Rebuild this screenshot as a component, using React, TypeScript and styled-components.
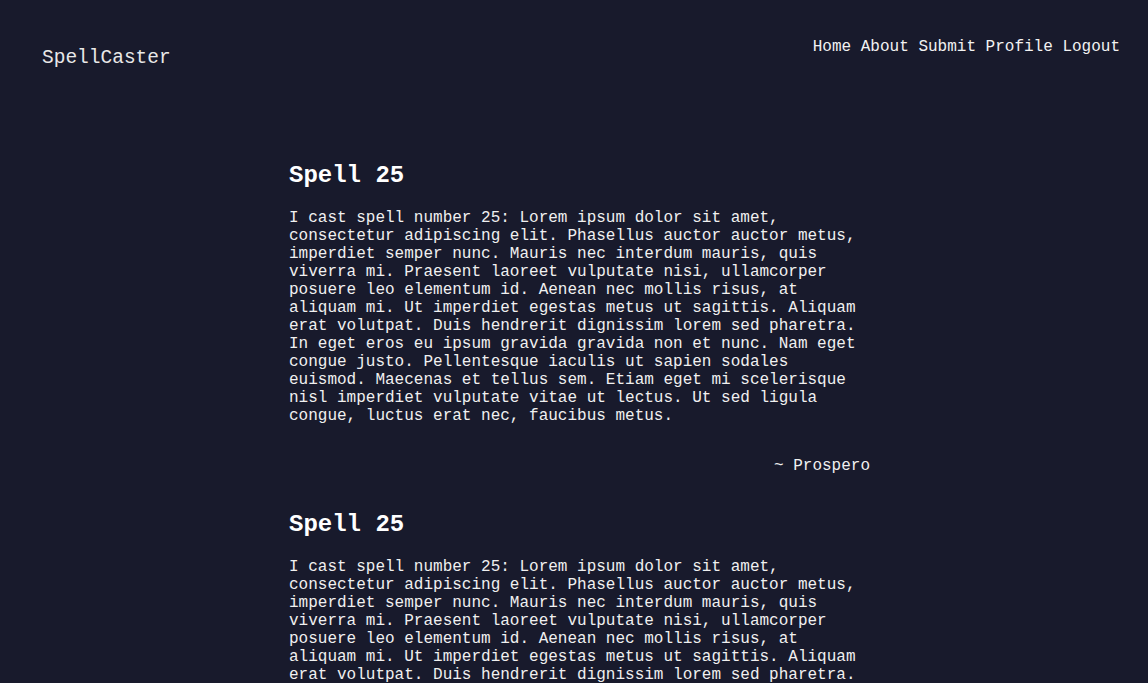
import React from "react";
import styled, { createGlobalStyle } from "styled-components";

const GlobalStyle = createGlobalStyle`
  html, body {
    margin: 0;
    padding: 0;
    background: #181a2c;
  }
  body {
    font-family: "Liberation Mono", "Courier New", monospace;
    color: #eeeeee;
  }
`;

const Page = styled.div`
  min-height: 100vh;
  background: #181a2c;
`;

const Header = styled.header`
  display: flex;
  justify-content: space-between;
  align-items: flex-start;
  padding: 38px 28px 0 42px;
`;

const Logo = styled.div`
  font-size: 19.5px;
  line-height: 23px;
  margin-top: 9px;
  color: #e8e8e8;
`;

const Nav = styled.nav`
  display: flex;
  gap: 9.6px;
  font-size: 16px;
  line-height: 18px;
`;

const NavLink = styled.a`
  color: #f2f2f2;
  text-decoration: none;
  cursor: pointer;
`;

const Main = styled.main`
  width: 581px;
  margin: 0 0 0 289px;
  padding-top: 92px;
  display: flex;
  flex-direction: column;
`;

const Post = styled.article`
  display: flex;
  flex-direction: column;
  margin-bottom: 36px;
`;

const Title = styled.h2`
  margin: 0 0 20px;
  font-size: 24px;
  line-height: 27px;
  font-weight: bold;
  color: #ffffff;
`;

const Body = styled.p`
  margin: 0;
  font-size: 16px;
  line-height: 18px;
  color: #f0f0f0;
`;

const Author = styled.div`
  margin-top: 32px;
  text-align: right;
  font-size: 16px;
  line-height: 18px;
  color: #f0f0f0;
`;

const text =
  "I cast spell number 25: Lorem ipsum dolor sit amet, consectetur adipiscing elit. Phasellus auctor auctor metus, imperdiet semper nunc. Mauris nec interdum mauris, quis viverra mi. Praesent laoreet vulputate nisi, ullamcorper posuere leo elementum id. Aenean nec mollis risus, at aliquam mi. Ut imperdiet egestas metus ut sagittis. Aliquam erat volutpat. Duis hendrerit dignissim lorem sed pharetra. In eget eros eu ipsum gravida gravida non et nunc. Nam eget congue justo. Pellentesque iaculis ut sapien sodales euismod. Maecenas et tellus sem. Etiam eget mi scelerisque nisl imperdiet vulputate vitae ut lectus. Ut sed ligula congue, luctus erat nec, faucibus metus.";

const posts = [1, 2, 3];

export default function App() {
  return (
    <Page>
      <GlobalStyle />
      <Header>
        <Logo>SpellCaster</Logo>
        <Nav>
          <NavLink>Home</NavLink>
          <NavLink>About</NavLink>
          <NavLink>Submit</NavLink>
          <NavLink>Profile</NavLink>
          <NavLink>Logout</NavLink>
        </Nav>
      </Header>
      <Main>
        {posts.map((p) => (
          <Post key={p}>
            <Title>Spell 25</Title>
            <Body>{text}</Body>
            <Author>~ Prospero</Author>
          </Post>
        ))}
      </Main>
    </Page>
  );
}
